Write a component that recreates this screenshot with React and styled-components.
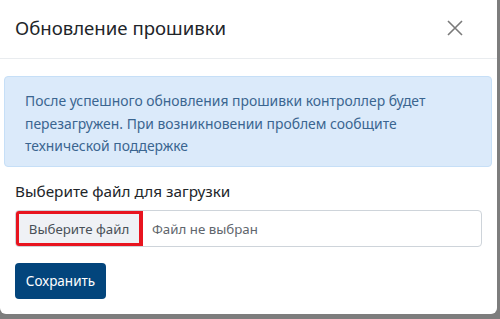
import React from "react";
import styled, { createGlobalStyle } from "styled-components";

const GlobalStyle = createGlobalStyle`
  html, body {
    margin: 0;
    padding: 0;
    background: #7d7d7d;
  }
  body {
    font-family: "Noto Sans", "Open Sans", sans-serif;
  }
`;

const Page = styled.div`
  width: 500px;
  height: 319px;
  background: #7d7d7d;
  overflow: hidden;
`;

const Modal = styled.div`
  width: 497px;
  height: 314px;
  background: #fff;
  border-radius: 0 0 6px 6px;
  display: flex;
  flex-direction: column;
`;

const Header = styled.div`
  height: 59px;
  box-sizing: border-box;
  border-bottom: 1px solid #e9ecef;
  display: flex;
  align-items: center;
  justify-content: space-between;
  padding: 0 34px 3px 15px;
`;

const Title = styled.h5`
  margin: 0;
  font-size: 18.6px;
  font-weight: 400;
  color: #212529;
`;

const Close = styled.button`
  border: 0;
  background: none;
  padding: 0;
  width: 16px;
  height: 16px;
  display: flex;
  cursor: pointer;
`;

const Body = styled.div`
  padding: 17px 4px 0 4px;
  display: flex;
  flex-direction: column;
`;

const Alert = styled.div`
  width: 488px;
  height: 91px;
  box-sizing: border-box;
  background: #dbeafa;
  border: 1px solid #c6dff7;
  border-radius: 4px;
  padding: 13px 20px 0 20px;
  color: #3a6590;
  font-size: 13.9px;
  line-height: 22.5px;
`;

const Field = styled.div`
  padding: 13px 11px 0 11px;
  display: flex;
  flex-direction: column;
`;

const Label = styled.label`
  font-size: 15.3px;
  color: #212529;
  line-height: 22px;
  margin-bottom: 8px;
`;

const FileBox = styled.div`
  display: flex;
  align-items: stretch;
  width: 467px;
  height: 37px;
  box-sizing: border-box;
  border: 1px solid #ced4da;
  border-radius: 4px;
  overflow: hidden;
`;

const FileButton = styled.div`
  width: 128px;
  box-sizing: border-box;
  margin: -1px 0 -1px -1px;
  background: #eff1f5;
  border: 4px solid #e8141f;
  display: flex;
  align-items: center;
  justify-content: center;
  font-size: 13.3px;
  color: #495057;
`;

const FileName = styled.div`
  display: flex;
  align-items: center;
  padding-left: 9px;
  font-size: 13.3px;
  color: #5f666d;
`;

const SaveButton = styled.button`
  margin-top: 16px;
  align-self: flex-start;
  width: 91px;
  height: 36px;
  border: 0;
  border-radius: 4px;
  background: #03457c;
  color: #fff;
  font-family: inherit;
  font-size: 13.5px;
  cursor: pointer;
`;

export default function App() {
  return (
    <Page>
      <GlobalStyle />
      <Modal>
        <Header>
          <Title>Обновление прошивки</Title>
          <Close aria-label="Закрыть">
            <svg width="16" height="16" viewBox="0 0 16 16">
              <path d="M1 1L15 15M15 1L1 15" stroke="#7a7a7a" strokeWidth="1.6" fill="none" />
            </svg>
          </Close>
        </Header>
        <Body>
          <Alert>
            После успешного обновления прошивки контроллер будет перезагружен. При возникновении
            проблем сообщите технической поддержке
          </Alert>
          <Field>
            <Label>Выберите файл для загрузки</Label>
            <FileBox>
              <FileButton>Выберите файл</FileButton>
              <FileName>Файл не выбран</FileName>
            </FileBox>
            <SaveButton>Сохранить</SaveButton>
          </Field>
        </Body>
      </Modal>
    </Page>
  );
}
